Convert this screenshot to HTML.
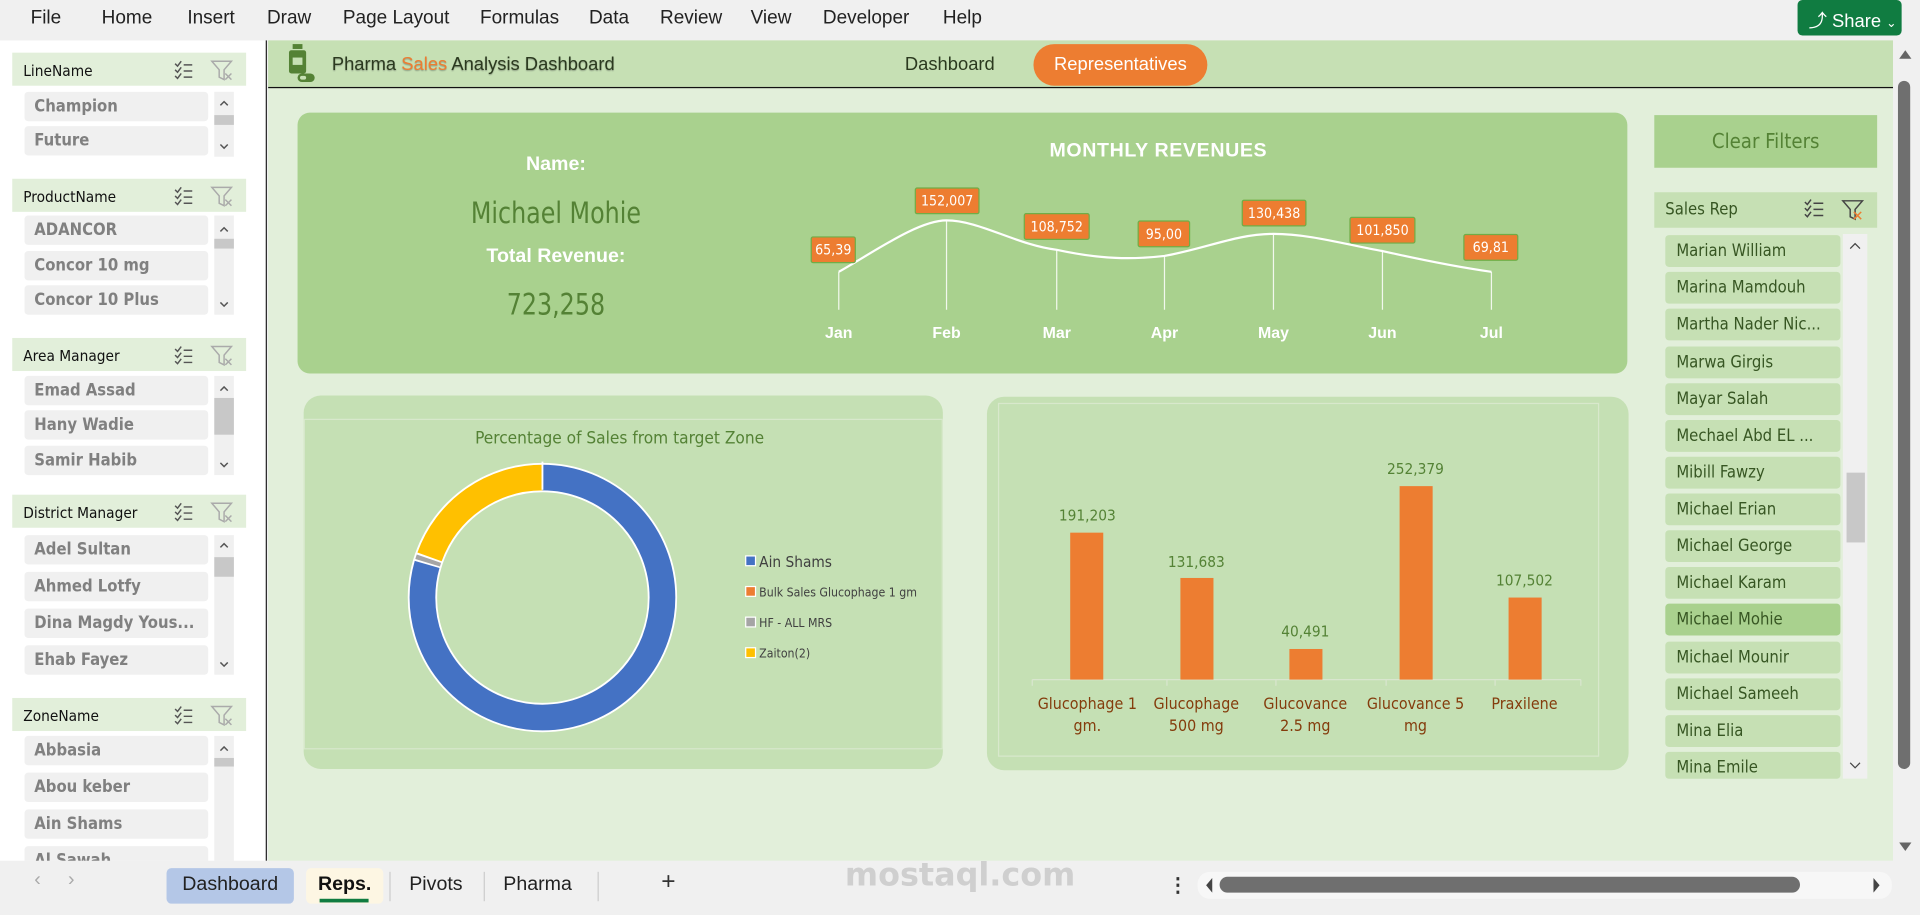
<!DOCTYPE html>
<html><head><meta charset="utf-8"><style>
*{margin:0;padding:0;box-sizing:border-box}
html,body{width:1920px;height:915px;overflow:hidden;background:#f0f0f0;font-family:"Liberation Sans",sans-serif}
#w{position:absolute;left:0;top:0;width:1568px;height:747px;transform:scale(1.22449);transform-origin:0 0;background:#f0f0f0}
.a{position:absolute}
.menu{position:absolute;top:6px;font-size:15.5px;color:#222}
.sh{position:absolute;left:10px;width:191px;height:27px;background:#e2efda;font-family:"DejaVu Sans Condensed","DejaVu Sans",sans-serif;font-size:12.5px;color:#111;padding:7px 0 0 9px}
.si{position:absolute;left:20px;width:150px;height:24px;background:#f0f0f0;border-radius:3px;font-family:"DejaVu Sans Condensed","DejaVu Sans",sans-serif;font-weight:bold;font-size:13.5px;color:#808080;padding:4px 0 0 8px;white-space:nowrap}
.sc{position:absolute;left:175px;width:16px;background:#f0f0f0}
.ri{position:absolute;left:1360px;width:143px;height:26px;background:#c6e0b4;border-radius:3px;font-family:"DejaVu Sans Condensed","DejaVu Sans",sans-serif;font-size:13.5px;color:#375623;padding:5px 0 0 9px;white-space:nowrap}
.lb{position:absolute;height:22px;background:#ed7d31;border:1px solid #70ad47;border-radius:2px;color:#fff;font-size:11.5px;text-align:center;line-height:20px;font-family:"DejaVu Sans Condensed","DejaVu Sans",sans-serif}
.mo{position:absolute;top:264px;color:#fff;font-weight:bold;font-size:13px;width:40px;text-align:center}
.tab{position:absolute;top:709px;height:29px;font-size:16px;color:#222;padding-top:5px;text-align:center}
</style></head><body><div id="w">
<div class="menu" style="left:25px">File</div>
<div class="menu" style="left:83px">Home</div>
<div class="menu" style="left:153px">Insert</div>
<div class="menu" style="left:218px">Draw</div>
<div class="menu" style="left:280px">Page Layout</div>
<div class="menu" style="left:392px">Formulas</div>
<div class="menu" style="left:481px">Data</div>
<div class="menu" style="left:539px">Review</div>
<div class="menu" style="left:613px">View</div>
<div class="menu" style="left:672px">Developer</div>
<div class="menu" style="left:770px">Help</div>
<div class="a" style="left:1468px;top:0;width:85px;height:29px;background:#107c41;border-radius:4px;color:#fff;font-size:15px;padding:6px 0 0 9px">&#x2934; Share <span style="font-size:10px">&#x2304;</span></div>

<div class="a" style="left:0;top:33px;width:218px;height:670px;background:#fff;border-right:1.5px solid #222;overflow:hidden">
<div style="position:absolute;left:0;top:-33px;width:218px;height:703px">
<div class="sh" style="top:43px">LineName</div>
<div class="si" style="top:75px">Champion</div><div class="si" style="top:103px">Future</div>
<div class="sc" style="top:75px;height:53px"></div><div class="a" style="left:175px;top:94px;width:16px;height:8px;background:#c8c8c8"></div>
<div class="sh" style="top:146px">ProductName</div>
<div class="si" style="top:176px">ADANCOR</div><div class="si" style="top:205px">Concor 10 mg</div><div class="si" style="top:233px">Concor 10 Plus</div>
<div class="sc" style="top:176px;height:81px"></div><div class="a" style="left:175px;top:195px;width:16px;height:8px;background:#c8c8c8"></div>
<div class="sh" style="top:276px">Area Manager</div>
<div class="si" style="top:307px">Emad Assad</div><div class="si" style="top:335px">Hany Wadie</div><div class="si" style="top:364px">Samir Habib</div>
<div class="sc" style="top:307px;height:81px"></div><div class="a" style="left:175px;top:325px;width:16px;height:30px;background:#c8c8c8"></div>
<div class="sh" style="top:404px">District Manager</div>
<div class="si" style="top:437px">Adel Sultan</div><div class="si" style="top:467px">Ahmed Lotfy</div><div class="si" style="top:497px">Dina Magdy Yous...</div><div class="si" style="top:527px">Ehab Fayez</div>
<div class="sc" style="top:437px;height:114px"></div><div class="a" style="left:175px;top:455px;width:16px;height:16px;background:#c8c8c8"></div>
<div class="sh" style="top:570px">ZoneName</div>
<div class="si" style="top:601px">Abbasia</div><div class="si" style="top:631px">Abou keber</div><div class="si" style="top:661px">Ain Shams</div><div class="si" style="top:691px">Al Sawah</div>
<div class="sc" style="top:601px;height:110px"></div><div class="a" style="left:175px;top:619px;width:16px;height:7px;background:#c8c8c8"></div>
<svg class="a" style="left:0;top:0" width="218" height="703" fill="none" stroke="#555" stroke-width="1.2">
<g id="ics">
<path d="M143 52l2 2 3-4M143 57l2 2 3-4M143 62l2 2 3-4M150 53h7M150 58h7M150 63h7"/>
<path d="M173 50h16l-6 7v8l-4-2v-6z" stroke="#aaa"/><path d="M184 60l5 5M189 60l-5 5" stroke="#aaa"/>
<path d="M180 86l3-3 3 3"/>
</g>
<use href="#ics" y="103"/><use href="#ics" y="233"/><use href="#ics" y="361"/><use href="#ics" y="527"/>
<path d="M180 118l3 3 3-3M180 247l3 3 3-3M180 378l3 3 3-3M180 541l3 3 3-3"/>
</svg>
</div></div>

<div class="a" style="left:219px;top:33px;width:1327px;height:670px;background:#e2efda"></div>
<div class="a" style="left:219px;top:33px;width:1327px;height:39px;background:#c6e0b4;border-bottom:1.5px solid #111"></div>
<svg class="a" style="left:234px;top:35px" width="26" height="34"><rect x="5" y="1" width="8" height="4" fill="#548235"/><rect x="2" y="6" width="14" height="19" rx="2" fill="#548235"/><rect x="5" y="12" width="8" height="6" fill="#c6e0b4"/><rect x="9" y="25" width="14" height="7" rx="3.5" fill="#548235"/><rect x="11" y="27" width="5" height="3" rx="1.5" fill="#c6e0b4"/></svg>
<div class="a" style="left:271px;top:44px;font-size:15px;color:#2b3a1f;text-shadow:0 1px 1px #8a9a80">Pharma <span style="color:#ed7d31">Sales</span> Analysis Dashboard</div>
<div class="a" style="left:739px;top:44px;font-size:15px;color:#2b3a1f">Dashboard</div>
<div class="a" style="left:844px;top:36px;width:142px;height:34px;background:#ed7d31;border-radius:17px;color:#fff;font-size:15px;text-align:center;line-height:33px">Representatives</div>

<div class="a" style="left:243px;top:92px;width:1086px;height:213px;background:#a9d18e;border-radius:10px"></div>
<div class="a" style="left:354px;top:126px;width:200px;text-align:center;color:#fff;font-weight:bold;font-size:16px">Name:</div>
<div class="a" style="left:334px;top:160px;width:240px;text-align:center;color:#548235;font-size:24px;font-family:'DejaVu Sans Condensed',sans-serif;transform:scaleX(.9)">Michael Mohie</div>
<div class="a" style="left:354px;top:201px;width:200px;text-align:center;color:#fff;font-weight:bold;font-size:16px">Total Revenue:</div>
<div class="a" style="left:354px;top:235px;width:200px;text-align:center;color:#548235;font-size:24px;font-family:'DejaVu Sans Condensed',sans-serif;transform:scaleX(.9)">723,258</div>
<div class="a" style="left:796px;top:115px;width:300px;text-align:center;color:#fff;font-weight:bold;font-size:16px;letter-spacing:.5px">MONTHLY REVENUES</div>
<svg class="a" style="left:0;top:0" width="1568" height="320" fill="none">
<g stroke="#fff" stroke-width="1" opacity=".85"><path d="M685 222V253M773 180V253M863 204V253M951 209V253M1040 191V253M1129 205V253M1218 222V253"/></g>
<path d="M685 222C715 205 750 180 773 180C800 180 830 200 863 204C900 212 925 212 951 209C985 203 1010 191 1040 191C1070 191 1100 200 1129 205C1160 212 1190 218 1218 222" stroke="#fff" stroke-width="1.8"/>
</svg>
<div class="lb" style="left:662px;top:193px;width:37px">65,39</div>
<div class="lb" style="left:747px;top:153px;width:53px">152,007</div>
<div class="lb" style="left:836px;top:174px;width:54px">108,752</div>
<div class="lb" style="left:929px;top:180px;width:43px">95,00</div>
<div class="lb" style="left:1014px;top:163px;width:53px">130,438</div>
<div class="lb" style="left:1102px;top:177px;width:54px">101,850</div>
<div class="lb" style="left:1195px;top:191px;width:45px">69,81</div>
<div class="mo" style="left:665px">Jan</div><div class="mo" style="left:753px">Feb</div><div class="mo" style="left:843px">Mar</div><div class="mo" style="left:931px">Apr</div><div class="mo" style="left:1020px">May</div><div class="mo" style="left:1109px">Jun</div><div class="mo" style="left:1198px">Jul</div>

<div class="a" style="left:248px;top:323px;width:522px;height:305px;background:#c5e0b4;border-radius:14px"></div>
<div class="a" style="left:248px;top:342px;width:522px;height:270px;border:1px solid #d8e8cc"></div>
<div class="a" style="left:306px;top:350px;width:400px;text-align:center;color:#548235;font-size:14px;font-family:'DejaVu Sans Condensed',sans-serif">Percentage of Sales from target Zone</div>
<svg class="a" style="left:0;top:0" width="780" height="640">
<circle cx="443" cy="488" r="98" fill="none" stroke="#fff" stroke-width="24"/>
<g transform="rotate(-90 443 488)" fill="none" stroke-width="21">
<circle cx="443" cy="488" r="98" stroke="#4472c4" stroke-dasharray="489 1000"/>
<circle cx="443" cy="488" r="98" stroke="#a5a5a5" stroke-dasharray="0 490.5 3.5 1000"/>
<circle cx="443" cy="488" r="98" stroke="#ffc000" stroke-dasharray="0 495.5 120.3 1000"/>
</g>
<path d="M443 377V400" stroke="#fff" stroke-width="1.5"/>
<rect x="609" y="454" width="8" height="8" fill="#4472c4" stroke="#fff"/>
<rect x="609" y="479" width="8" height="8" fill="#ed7d31" stroke="#fff"/>
<rect x="609" y="504" width="8" height="8" fill="#a5a5a5" stroke="#fff"/>
<rect x="609" y="529" width="8" height="8" fill="#ffc000" stroke="#fff"/>
<g font-family="DejaVu Sans Condensed,sans-serif" fill="#404040">
<text x="620" y="463" font-size="12.5">Ain Shams</text>
<text x="620" y="487" font-size="10">Bulk Sales Glucophage 1 gm</text>
<text x="620" y="512" font-size="10">HF - ALL MRS</text>
<text x="620" y="537" font-size="10">Zaiton(2)</text>
</g>
</svg>

<div class="a" style="left:806px;top:324px;width:524px;height:305px;background:#c5e0b4;border-radius:14px"></div>
<div class="a" style="left:815px;top:329px;width:491px;height:289px;border:1px solid #d8e8cc"></div>
<svg class="a" style="left:0;top:0" width="1340" height="640">
<path d="M843 555H1291M843 555v5M953 555v5M1042 555v5M1132 555v5M1221 555v5M1291 555v5" stroke="#d9e6cf" stroke-width="1"/>
<g fill="#ed7d31"><rect x="874" y="435" width="27" height="120"/><rect x="964" y="472" width="27" height="83"/><rect x="1053" y="530" width="27" height="25"/><rect x="1143" y="397" width="27" height="158"/><rect x="1232" y="488" width="27" height="67"/></g>
<g font-family="DejaVu Sans Condensed,sans-serif" font-size="12.5" fill="#548235" text-anchor="middle">
<text x="888" y="425">191,203</text><text x="977" y="463">131,683</text><text x="1066" y="520">40,491</text><text x="1156" y="387">252,379</text><text x="1245" y="478">107,502</text></g>
<g font-family="DejaVu Sans Condensed,sans-serif" font-size="13" fill="#843c0c" text-anchor="middle">
<text x="888" y="579">Glucophage 1</text><text x="888" y="597">gm.</text>
<text x="977" y="579">Glucophage</text><text x="977" y="597">500 mg</text>
<text x="1066" y="579">Glucovance</text><text x="1066" y="597">2.5 mg</text>
<text x="1156" y="579">Glucovance 5</text><text x="1156" y="597">mg</text>
<text x="1245" y="579">Praxilene</text></g>
</svg>

<div class="a" style="left:1351px;top:94px;width:182px;height:43px;background:#a9d18e;color:#548235;font-size:16.5px;text-align:center;line-height:43px;font-family:'DejaVu Sans Condensed',sans-serif">Clear Filters</div>
<div class="a" style="left:1351px;top:157px;width:182px;height:29px;background:#c6e0b4;color:#375623;font-size:13.5px;padding:6px 0 0 9px;font-family:'DejaVu Sans Condensed',sans-serif">Sales Rep</div>
<svg class="a" style="left:1470px;top:160px" width="60" height="24" fill="none" stroke="#444" stroke-width="1.2"><path d="M4 5l2 2 3-4M4 10l2 2 3-4M4 15l2 2 3-4M11 6h8M11 11h8M11 16h8"/><path d="M35 4h16l-6 7v8l-4-2v-6z"/><path d="M44 13l6 6M50 13l-6 6" stroke="#ed7d31"/></svg>
<div class="a" style="left:1360px;top:191px;width:165px;height:445px;overflow:hidden">
<div style="position:absolute;left:145px;top:0;width:20px;height:445px;background:#f0f0f0"></div>
<div style="position:absolute;left:148px;top:195px;width:15px;height:57px;background:#c8c8c8"></div>
<svg style="position:absolute;left:145px;top:0" width="20" height="445" fill="none" stroke="#444"><path d="M6 12l4-4 4 4M6 432l4 4 4-4"/></svg>
</div>
<div class="ri" style="top:192px">Marian William</div>
<div class="ri" style="top:222px">Marina Mamdouh</div>
<div class="ri" style="top:252px">Martha Nader Nic...</div>
<div class="ri" style="top:283px">Marwa Girgis</div>
<div class="ri" style="top:313px">Mayar Salah</div>
<div class="ri" style="top:343px">Mechael Abd EL ...</div>
<div class="ri" style="top:373px">Mibill Fawzy</div>
<div class="ri" style="top:403px">Michael Erian</div>
<div class="ri" style="top:433px">Michael George</div>
<div class="ri" style="top:463px">Michael Karam</div>
<div class="ri" style="top:493px;background:#a9d18e">Michael Mohie</div>
<div class="ri" style="top:524px">Michael Mounir</div>
<div class="ri" style="top:554px">Michael Sameeh</div>
<div class="ri" style="top:584px">Mina Elia</div>
<div class="ri" style="top:614px;height:22px">Mina Emile</div>

<div class="a" style="left:1546px;top:33px;width:22px;height:670px;background:#f0f0f0"></div>
<div class="a" style="left:1550px;top:66px;width:10px;height:562px;background:#6f6f6f;border-radius:5px"></div>
<svg class="a" style="left:1546px;top:36px" width="22" height="670" fill="#666"><path d="M5 12l5-7 5 7z"/><path d="M5 652l5 7 5-7z"/></svg>

<div class="a" style="left:0;top:703px;width:1568px;height:44px;background:#f0f0f0"></div>
<div class="a" style="left:28px;top:710px;font-size:16px;color:#aaa">&#x2039;&nbsp;&nbsp;&nbsp;&nbsp;&nbsp;&#x203A;</div>
<div class="tab" style="left:136px;width:104px;background:#b4c7e7;border-radius:4px">Dashboard</div>
<div class="tab" style="left:250px;width:63px;background:#fdf6e3;border-radius:4px;font-weight:bold;color:#111">Reps.<div style="position:absolute;left:11px;top:25px;width:40px;height:3px;background:#107c41"></div></div>
<div class="a" style="left:318px;top:712px;width:1px;height:24px;background:#ccc"></div>
<div class="tab" style="left:328px;width:56px">Pivots</div>
<div class="a" style="left:395px;top:712px;width:1px;height:24px;background:#ccc"></div>
<div class="tab" style="left:404px;width:70px">Pharma</div>
<div class="a" style="left:488px;top:712px;width:1px;height:24px;background:#ccc"></div>
<div class="a" style="left:540px;top:709px;font-size:20px;color:#333">+</div>
<div class="a" style="left:690px;top:700px;font-size:26px;color:#cfcfcf;font-family:'DejaVu Sans',sans-serif;font-weight:bold">mostaql.com</div>
<div class="a" style="left:954px;top:713px;font-size:16px;color:#333;font-weight:bold">&#8942;</div>
<div class="a" style="left:978px;top:712px;width:567px;height:22px;background:#f7f7f7;border-radius:10px"></div>
<div class="a" style="left:996px;top:716px;width:474px;height:13px;background:#6f6f6f;border-radius:7px"></div>
<svg class="a" style="left:978px;top:712px" width="570" height="22" fill="#444"><path d="M12 5l-5 6 5 6z"/><path d="M552 5l5 6-5 6z"/></svg>
</div></body></html>
